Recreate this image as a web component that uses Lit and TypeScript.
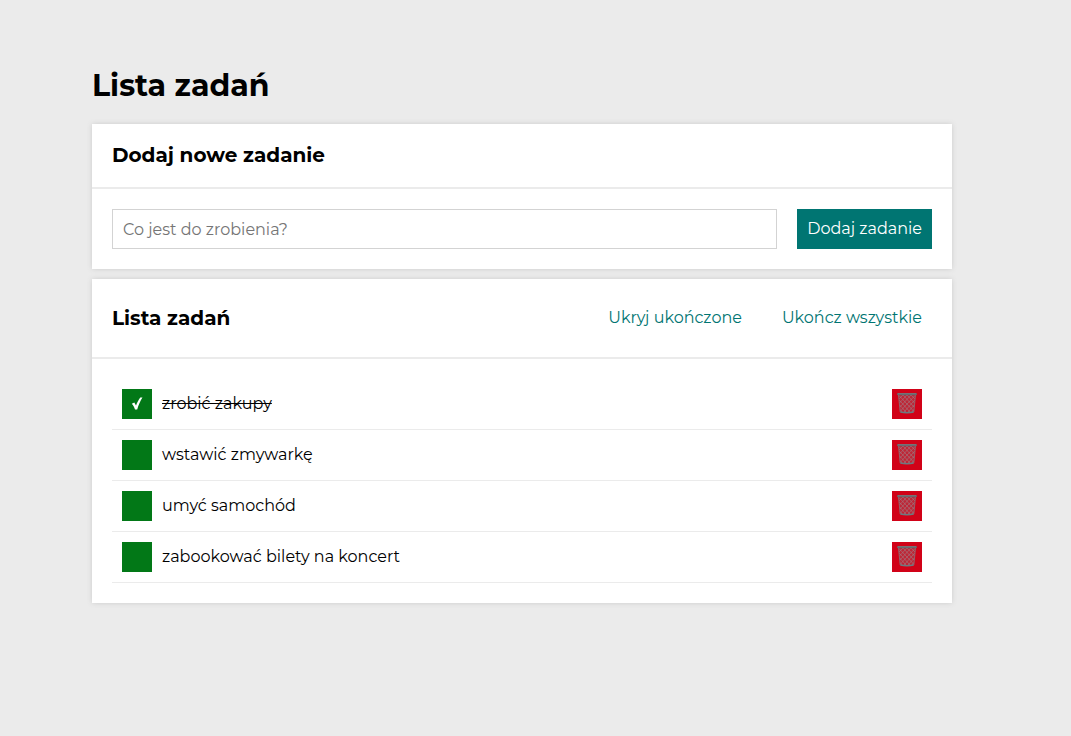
import { LitElement, html, css } from "lit";
import { customElement, state } from "lit/decorators.js";
import { classMap } from "lit/directives/class-map.js";

interface Task {
  content: string;
  done: boolean;
}

@customElement("trash-icon")
class TrashIcon extends LitElement {
  static styles = css`
    :host {
      display: block;
      width: 20px;
      height: 22px;
    }
    svg {
      display: block;
    }
  `;

  render() {
    return html`
      <svg width="20" height="22" viewBox="0 0 20 22" fill="none" aria-hidden="true">
        <path d="M1.5 2 L3.2 19 Q10 20.4 16.8 19 L18.5 2 Z" fill="#9a6a70" fill-opacity=".35" />
        <path
          d="M2 6 L6 2 M2.5 10 L10 2 M3 14 L14 2 M3.5 18 L18 2.5 M7 19 L17.8 7 M11 19 L17.3 12 M15 19 L16.8 16.5 M18 6 L14 2 M17.5 10 L10 2 M17 14 L6 2 M16.5 18 L2 2.5 M13 19 L2.2 7 M9 19 L2.7 12 M5 19 L3.2 16.5"
          stroke="#a08088"
          stroke-width=".6"
        />
        <path d="M1.5 2 L3.2 19 M18.5 2 L16.8 19" stroke="#8c6a70" stroke-width=".9" />
        <path d="M3.3 19 Q10 20.6 16.7 19" stroke="#6c7a80" stroke-width="1.5" />
        <rect x="0" y="0" width="20" height="2.2" rx="1" fill="#66666b" />
        <path d="M1 .7 H19" stroke="#8c8085" stroke-width=".6" />
      </svg>
    `;
  }
}

@customElement("app-root")
class AppRoot extends LitElement {
  static styles = css`
    :host {
      display: block;
      box-sizing: border-box;
      min-height: 100vh;
      padding: 66px 27px 20px 0;
      background: #ebebeb;
      color: #000;
      font-family: Montserrat, Inter, "Open Sans", sans-serif;
      font-size: 16px;
      line-height: 20px;
    }
    * {
      box-sizing: border-box;
    }
    .container {
      max-width: 860px;
      margin: 0 auto;
    }
    .title {
      margin: 0 0 18px;
      font-size: 30px;
      line-height: 40px;
      font-weight: 700;
    }
    .card {
      margin-bottom: 10px;
      background: #fff;
      box-shadow: 0 0 5px #ccc;
    }
    .header {
      display: flex;
      flex-wrap: wrap;
      align-items: center;
      justify-content: space-between;
      padding: 20px;
      border-bottom: 2px solid #ebebeb;
    }
    .heading {
      margin: 0;
      font-size: 20px;
      line-height: 23px;
      font-weight: 700;
    }
    .actions {
      display: flex;
      flex-wrap: wrap;
      gap: 20px;
    }
    .body {
      padding: 20px;
    }
    .form {
      display: flex;
      gap: 20px;
    }
    .input {
      flex: 1;
      min-width: 0;
      height: 40px;
      padding: 0 10px;
      border: 1px solid #d3d3d3;
      border-radius: 0;
      font: inherit;
    }
    .input::placeholder {
      color: #757575;
    }
    button {
      border: none;
      font: inherit;
      cursor: pointer;
    }
    .add {
      height: 40px;
      padding: 0 10px;
      background: #007572;
      color: #fff;
    }
    .link {
      padding: 9px 10px;
      background: none;
      color: #007572;
    }
    .list {
      margin: 0;
      padding: 0;
      list-style: none;
    }
    .item {
      display: flex;
      align-items: center;
      gap: 10px;
      padding: 10px;
      border-bottom: 1px solid #ebebeb;
    }
    .label {
      display: flex;
      flex: 1;
      align-items: center;
      gap: 10px;
    }
    .toggle {
      display: grid;
      place-items: center;
      flex: none;
      appearance: none;
      width: 30px;
      height: 30px;
      margin: 0;
      background: #027817;
      cursor: pointer;
    }
    .toggle:checked::before {
      content: "";
      width: 12px;
      height: 14px;
      background: #fff;
      clip-path: path("M.8 6.8 L3.3 5.4 L5 8.6 C6.2 5.4 7.6 2.8 9.3 .6 L11.5 .6 C9.4 3.8 7.6 7.8 6.2 12.6 L4 12.6 C3.2 10 2.3 8.2 .8 6.8 Z");
    }
    .done {
      text-decoration: line-through;
    }
    .remove {
      display: grid;
      place-items: center;
      flex: none;
      width: 30px;
      height: 30px;
      padding: 0;
      background: #d10218;
    }
  `;

  @state() private tasks: Task[] = [
    { content: "zrobić zakupy", done: true },
    { content: "wstawić zmywarkę", done: false },
    { content: "umyć samochód", done: false },
    { content: "zabookować bilety na koncert", done: false },
  ];

  @state() private hideDone = false;

  private addTask(event: Event) {
    event.preventDefault();
    const input = this.renderRoot.querySelector<HTMLInputElement>(".input")!;
    const content = input.value.trim();
    if (content) {
      this.tasks = [...this.tasks, { content, done: false }];
      input.value = "";
    }
    input.focus();
  }

  private toggleTask(task: Task) {
    this.tasks = this.tasks.map((t) => (t === task ? { ...t, done: !t.done } : t));
  }

  private removeTask(task: Task) {
    this.tasks = this.tasks.filter((t) => t !== task);
  }

  private completeAll() {
    this.tasks = this.tasks.map((t) => ({ ...t, done: true }));
  }

  private renderTask(task: Task) {
    return html`
      <li class="item">
        <label class="label">
          <input class="toggle" type="checkbox" .checked=${task.done} @change=${() => this.toggleTask(task)} />
          <span class=${classMap({ done: task.done })}>${task.content}</span>
        </label>
        <button class="remove" type="button" aria-label="Usuń zadanie" @click=${() => this.removeTask(task)}>
          <trash-icon></trash-icon>
        </button>
      </li>
    `;
  }

  render() {
    const visible = this.tasks.filter((t) => !(this.hideDone && t.done));
    return html`
      <main class="container">
        <h1 class="title">Lista zadań</h1>
        <section class="card">
          <header class="header"><h2 class="heading">Dodaj nowe zadanie</h2></header>
          <div class="body">
            <form class="form" @submit=${this.addTask}>
              <input class="input" type="text" placeholder="Co jest do zrobienia?" aria-label="Co jest do zrobienia?" />
              <button class="add" type="submit">Dodaj zadanie</button>
            </form>
          </div>
        </section>
        <section class="card">
          <header class="header">
            <h2 class="heading">Lista zadań</h2>
            <div class="actions">
              <button class="link" type="button" @click=${() => (this.hideDone = !this.hideDone)}>
                ${this.hideDone ? "Pokaż" : "Ukryj"} ukończone
              </button>
              <button class="link" type="button" @click=${this.completeAll}>Ukończ wszystkie</button>
            </div>
          </header>
          <div class="body">
            <ul class="list">
              ${visible.map((task) => this.renderTask(task))}
            </ul>
          </div>
        </section>
      </main>
    `;
  }
}
